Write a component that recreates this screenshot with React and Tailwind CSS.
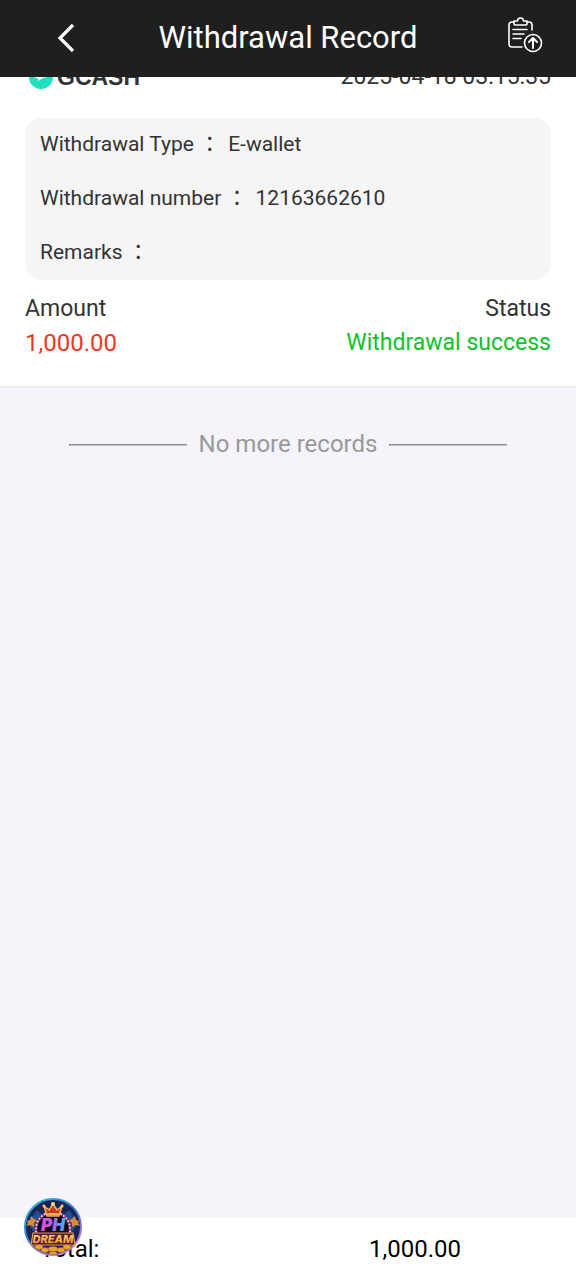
const record = {
  channel: 'GCASH',
  time: '2025-04-18 03:15:35',
  amount: '1,000.00',
  status: 'Withdrawal success',
  details: [
    { label: 'Withdrawal Type', value: 'E-wallet' },
    { label: 'Withdrawal number', value: '12163662610' },
    { label: 'Remarks', value: '' },
  ],
};

export default function App() {
  return (
    <div className="flex min-h-screen flex-col bg-[#f4f4fa] font-['Roboto','Noto_Sans_CJK_TC',sans-serif] text-[#333]">
      <Header />

      <main className="flex-1">
        <RecordCard record={record} />

        {/* End of list */}
        <div className="flex items-center justify-center gap-3 px-16 pt-10 text-2xl text-[#999]">
          <span className="mt-0.5 h-0.5 w-[118px] border-t border-l border-[#8e8e92] bg-[#c4c4c8]" />
          <p>No more records</p>
          <span className="mt-0.5 h-0.5 w-[118px] border-t border-l border-[#8e8e92] bg-[#c4c4c8]" />
        </div>
      </main>

      <Footer total={record.amount} />
    </div>
  );
}

function Header() {
  return (
    <header className="sticky top-0 z-10 flex h-[77px] items-center justify-between bg-[#1f1f1f] px-[33px] text-white">
      <button type="button" aria-label="Back" className="flex w-16 justify-center">
        <svg width="20" height="32" viewBox="0 0 20 32" fill="none" stroke="currentColor" strokeWidth="3.2">
          <path d="M18 2 5 15l13 13" />
        </svg>
      </button>
      <h1 className="text-[31px]">Withdrawal Record</h1>
      <button type="button" aria-label="Withdrawal orders" className="flex w-16 justify-end pb-2">
        <ClipboardUpIcon />
      </button>
    </header>
  );
}

function RecordCard({ record }) {
  return (
    <section className="-mt-4 border-b-2 border-[#ebebed] bg-white px-[25px] pb-[26px]">
      <div className="flex h-8 items-center justify-between text-[23px]">
        <div className="flex items-center gap-1 pl-1">
          <GcashIcon />
          <span className="font-['Liberation_Sans',sans-serif] font-bold">{record.channel}</span>
        </div>
        <time>{record.time}</time>
      </div>

      <dl className="mt-[25px] flex flex-col rounded-2xl bg-[#f5f5f5] px-[15px] text-[21px]">
        {record.details.map(item => (
          <div key={item.label} className="flex h-[54px] items-center gap-2">
            <dt>{item.label} ：</dt>
            <dd>{item.value}</dd>
          </div>
        ))}
      </dl>

      <div className="mt-3 flex justify-between text-[23px] leading-[34px]">
        <div>
          <p>Amount</p>
          <p className="text-2xl leading-[34px] text-[#ea3a23]">{record.amount}</p>
        </div>
        <div className="text-right">
          <p>Status</p>
          <p className="text-[#10c22b]">{record.status}</p>
        </div>
      </div>
    </section>
  );
}

function Footer({ total }) {
  return (
    <footer className="relative grid h-[62px] grid-cols-2 items-center bg-white text-2xl text-black">
      <p className="pl-10">Total:</p>
      <p className="pr-[34px] text-center">{total}</p>
      <button type="button" aria-label="PH Dream" className="absolute bottom-6 left-6">
        <DreamBadge />
      </button>
    </footer>
  );
}

function ClipboardUpIcon() {
  return (
    <svg width="36" height="36" viewBox="0 0 36 36" fill="none" stroke="currentColor" strokeWidth="1.6" strokeLinecap="round" strokeLinejoin="round">
      <path d="M7 5H5a3 3 0 0 0-3 3v19a3 3 0 0 0 3 3h10" />
      <path d="M20 5h2a3 3 0 0 1 3 3v5" />
      <path d="M7 7V4h3.500a3 3 0 0 1 6 0H20V7a1 1 0 0 1-1 1H8a1 1 0 0 1-1-1Z" />
      <path d="M6 12.500h14M6 17h11M6 21.500h8" />
      <circle cx="26" cy="26" r="8.500" />
      <path d="M26 31V21.500M22 25l4-4 4 4" strokeWidth="2" />
    </svg>
  );
}

function GcashIcon() {
  return (
    <svg width="24" height="24" viewBox="0 0 24 24">
      <circle cx="12" cy="12" r="12" fill="#20e0bd" />
      <path d="M6 5h12v7l-4 1-5 3v-3H6Z" fill="#fff" />
    </svg>
  );
}

function DreamBadge() {
  return (
    <svg width="58" height="58" viewBox="0 0 58 58">
      <defs>
        <linearGradient id="ring" x1="0" y1="0" x2="0.6" y2="1">
          <stop offset="0" stopColor="#25c3e2" />
          <stop offset="0.5" stopColor="#3a76c6" />
          <stop offset="1" stopColor="#c277dd" />
        </linearGradient>
        <linearGradient id="ph" x1="0" y1="0" x2="1" y2="0">
          <stop offset="0" stopColor="#ee4fd5" />
          <stop offset="0.5" stopColor="#a869f0" />
          <stop offset="1" stopColor="#35b9f4" />
        </linearGradient>
        <linearGradient id="gold" x1="0" y1="0" x2="0" y2="1">
          <stop offset="0" stopColor="#ffe37a" />
          <stop offset="1" stopColor="#e98a20" />
        </linearGradient>
      </defs>
      <circle cx="29" cy="29" r="28" fill="#172454" stroke="url(#ring)" strokeWidth="2" />
      <path d="M3 25 13 12l6 5-8 18ZM55 25 45 12l-6 5 8 18Z" fill="#214d91" />
      {/* Arch with bulbs */}
      <path d="M12 37V31a17 17 0 0 1 34 0v6Z" fill="#12091f" stroke="#79326f" strokeWidth="3" />
      <path d="M12 37V31a17 17 0 0 1 34 0v6" fill="none" stroke="#f5c9dc" strokeWidth="2" strokeLinecap="round" strokeDasharray="0.1 3.3" />
      {/* Side ornaments */}
      <path d="m3 23 3-1 1-4 3 3 3 1-3 3v4l-4-2-4 1 2-3ZM55 23l-3-1-1-4-3 3-3 1 3 3v4l4-2 4 1-2-3Z" fill="#d78b32" />
      {/* Crown */}
      <path d="m20 8 5 4 4-6 4 6 5-4-3 10H23Z" fill="#c93824" stroke="#f2b75c" strokeWidth="1.5" />
      <path d="M22 16q7-2 14 0v2H22Z" fill="url(#gold)" />
      <circle cx="29" cy="6" r="2" fill="#ffd77b" />
      <circle cx="20" cy="8" r="1.500" fill="#ffc55e" />
      <circle cx="38" cy="8" r="1.500" fill="#ffc55e" />
      <text x="29" y="33" textAnchor="middle" fontFamily="Inter, sans-serif" fontSize="17" fontWeight="900" fontStyle="italic" fill="url(#ph)">PH</text>
      {/* Coins */}
      <g fill="#e8a92d" stroke="#a95b19" strokeWidth="0.6">
        <ellipse cx="15" cy="49" rx="4" ry="2.500" />
        <ellipse cx="21" cy="52" rx="4" ry="2.500" />
        <ellipse cx="29" cy="51" rx="5" ry="2.500" />
        <ellipse cx="37" cy="52" rx="4" ry="2.500" />
        <ellipse cx="43" cy="49" rx="4" ry="2.500" />
        <ellipse cx="29" cy="55" rx="4" ry="1.500" />
      </g>
      <path d="M9 35h40l2 12H7Z" fill="#551648" stroke="#e79a3a" strokeWidth="1.200" />
      <text x="29" y="45" textAnchor="middle" fontFamily="Inter, sans-serif" fontSize="11" fontWeight="800" fontStyle="italic" fill="url(#gold)">DREAM</text>
    </svg>
  );
}
